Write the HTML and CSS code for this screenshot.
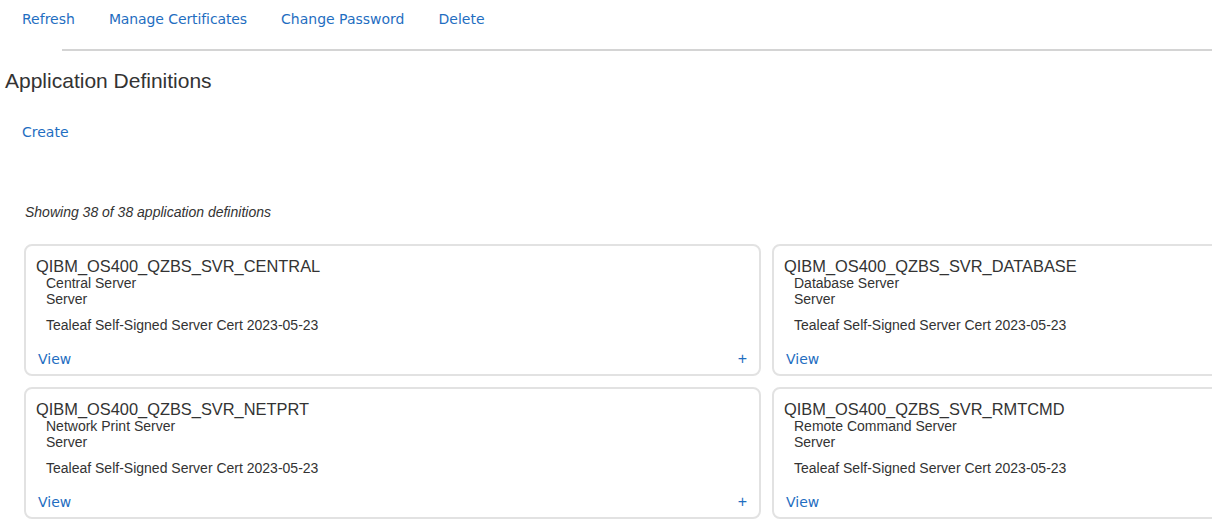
FILE: index.html
```html
<!DOCTYPE html>
<html lang="en">
<head>
  <meta charset="UTF-8">
  <title>Application Definitions</title>
  <link rel="stylesheet" href="styles.css">
</head>
<body>
  <div class="toolbar">
    <a href="#">Refresh</a>
    <a href="#">Manage Certificates</a>
    <a href="#">Change Password</a>
    <a href="#">Delete</a>
  </div>
  <div class="divider"></div>
  <h1 class="page-title">Application Definitions</h1>
  <div class="actions"><a href="#">Create</a></div>
  <div class="count">Showing 38 of 38 application definitions</div>

  <div class="card-grid">
    <div class="card">
      <div class="card-title">QIBM_OS400_QZBS_SVR_CENTRAL</div>
      <div class="card-sub">Central Server<br>Server</div>
      <div class="card-cert">Tealeaf Self-Signed Server Cert 2023-05-23</div>
      <div class="card-foot"><a href="#">View</a><span class="plus">+</span></div>
    </div>
    <div class="card">
      <div class="card-title">QIBM_OS400_QZBS_SVR_DATABASE</div>
      <div class="card-sub">Database Server<br>Server</div>
      <div class="card-cert">Tealeaf Self-Signed Server Cert 2023-05-23</div>
      <div class="card-foot"><a href="#">View</a><span class="plus">+</span></div>
    </div>
    <div class="card">
      <div class="card-title">QIBM_OS400_QZBS_SVR_NETPRT</div>
      <div class="card-sub">Network Print Server<br>Server</div>
      <div class="card-cert">Tealeaf Self-Signed Server Cert 2023-05-23</div>
      <div class="card-foot"><a href="#">View</a><span class="plus">+</span></div>
    </div>
    <div class="card">
      <div class="card-title">QIBM_OS400_QZBS_SVR_RMTCMD</div>
      <div class="card-sub">Remote Command Server<br>Server</div>
      <div class="card-cert">Tealeaf Self-Signed Server Cert 2023-05-23</div>
      <div class="card-foot"><a href="#">View</a><span class="plus">+</span></div>
    </div>
  </div>
</body>
</html>
```

FILE: styles.css
```css
html, body {margin: 0; padding: 0; background: #fff; overflow: hidden;}
body {font-family: "Liberation Sans", Arial, sans-serif; color: #333;}
a {color: #1f6ec1; text-decoration: none;}

.toolbar {display: flex; gap: 34px; padding-left: 22px; height: 38px; line-height: 38px; font-family: "DejaVu Sans", Verdana, sans-serif; font-size: 14px;}
.toolbar a:nth-child(2) {letter-spacing: -0.1px;}
.divider {margin: 11px 0 0 62px; border-top: 2px solid #d4d4d4;}

.page-title {margin: 18px 0 0 5px; font-size: 21px; line-height: 24px; font-weight: normal; color: #333;}
.actions {margin: 30px 0 0 22px; font-family: "DejaVu Sans", Verdana, sans-serif; font-size: 14px; line-height: 18px;}
.count {margin: 63px 0 0 25px; font-size: 14px; line-height: 16px; font-style: italic; color: #333;}

.card-grid {display: grid; grid-template-columns: 737px 737px; gap: 11px; margin: 24px 0 0 24px;}
.card {box-sizing: border-box; height: 132px; border: 2px solid #e2e2e2; border-radius: 8px; padding: 11px 12px 0 10px;}
.card-title {font-size: 16.4px; line-height: 18px;}
.card-sub {padding-left: 10px; font-size: 14px; line-height: 16px;}
.card-cert {margin-top: 10px; padding-left: 10px; font-size: 14px; line-height: 16px;}
.card-foot {display: flex; justify-content: space-between; margin-top: 17px; padding-left: 2px; font-family: "DejaVu Sans", Verdana, sans-serif; font-size: 14px; line-height: 18px;}
.plus {color: #1f6ec1; font-family: "Liberation Sans", Arial, sans-serif; font-size: 16px;}
```
